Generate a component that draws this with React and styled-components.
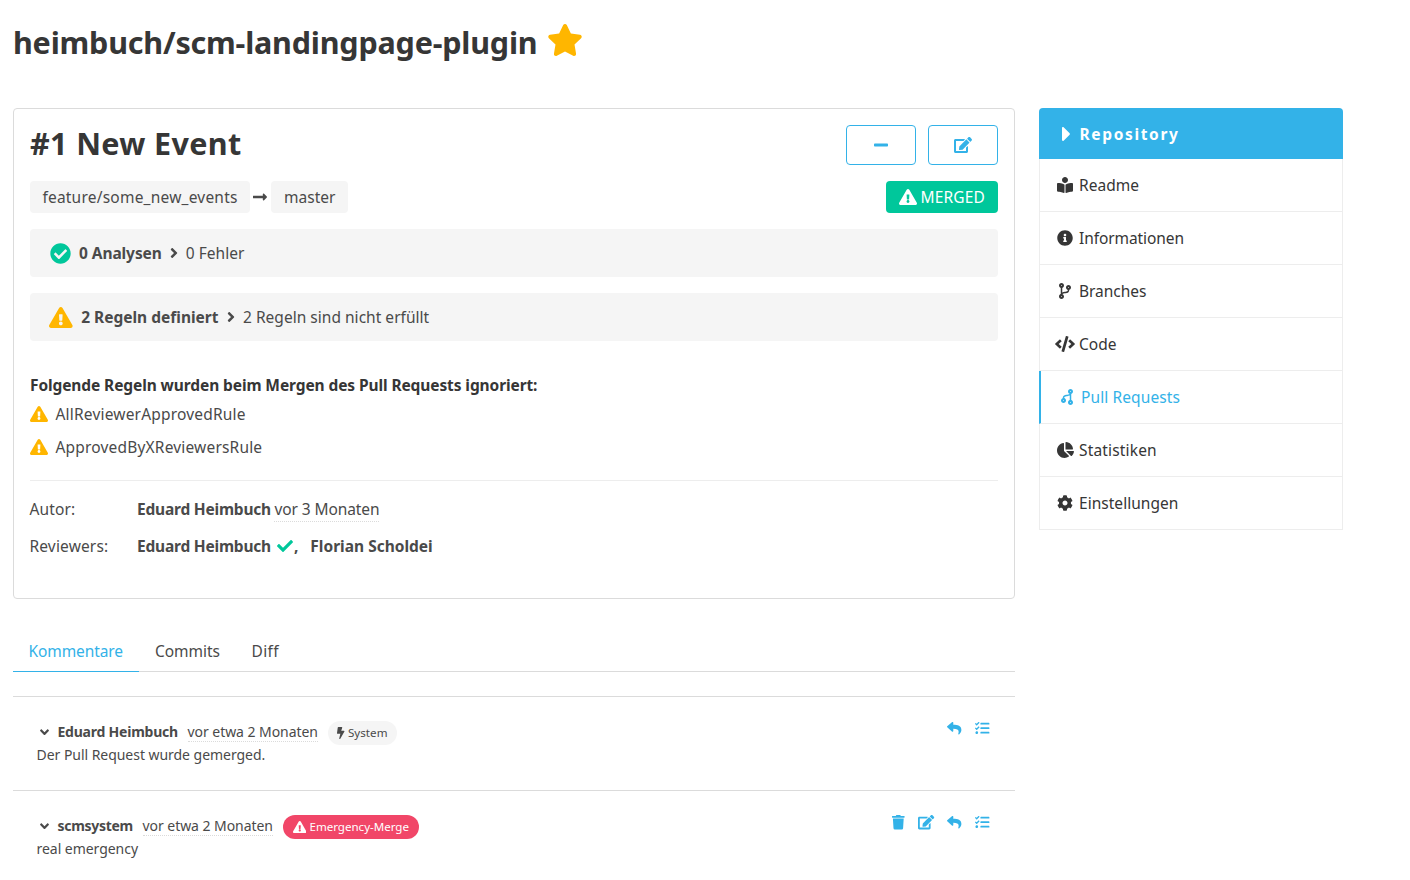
import React from "react";
import styled, { createGlobalStyle } from "styled-components";
import {
  FaStar, FaMinus, FaEdit, FaExclamationTriangle, FaLongArrowAltRight, FaCheckCircle,
  FaAngleRight, FaAngleDown, FaCheck, FaBolt, FaReply, FaTasks, FaTrash, FaCaretRight,
  FaBookReader, FaInfoCircle, FaCodeBranch, FaCode, FaChartPie, FaCog,
} from "react-icons/fa";

const c = {
  text: "#4a4a4a", dark: "#363636", blue: "#33b2e8", green: "#00c79b",
  yellow: "#ffb600", red: "#f14668", line: "#dbdbdb", soft: "#ededed", light: "#f5f5f5",
};

const GlobalStyle = createGlobalStyle`
  *, *::before, *::after { box-sizing: border-box; }
  body {
    margin: 0;
    background: #fff;
    color: ${c.text};
    font: 400 15.5px/24px "Noto Sans", "Open Sans", sans-serif;
    overflow: hidden;
  }
  h1, h2, p { margin: 0; padding: 0; }
`;

const Text = styled.span`
  font-weight: ${(p) => (p.$bold ? 700 : "inherit")};
  letter-spacing: ${(p) => p.$ls || 0}px;
  margin-left: ${(p) => p.$ml || 0}px;
  white-space: pre;
`;

/* $ratio is the glyph's width relative to its height */
const Icon = styled.span`
  display: inline-flex;
  flex: none;
  align-items: center;
  justify-content: center;
  width: ${(p) => (p.$width ? `${p.$width}px` : "auto")};
  margin-left: ${(p) => p.$ml || 0}px;
  font-size: ${(p) => p.$size || 16}px;
  color: ${(p) => p.$color || "inherit"};
  svg {
    flex: none;
    width: ${(p) => p.$ratio || 1}em;
    height: 1em;
    transform: ${(p) => (p.$flip ? "rotate(180deg)" : "none")};
  }
`;

const Page = styled.div`
  height: 880px;
  padding: 0 13px;
  overflow: hidden;
`;

const Header = styled.header`
  display: flex;
  align-items: flex-start;
  height: 108px;
  padding-top: 22px;
`;

const StarSlot = styled.span`
  display: flex;
  margin: 2px 0 0 10px;
`;

const RepoTitle = styled.h1`
  font-size: 30.5px;
  line-height: 40px;
  font-weight: 700;
  color: ${c.dark};
`;

const Columns = styled.div`
  display: flex;
  align-items: flex-start;
  gap: 24px;
`;

const Main = styled.main`
  width: 1002px;
`;

const Card = styled.section`
  height: 491px;
  padding: 16px;
  border: 1px solid ${c.line};
  border-radius: 4px;
`;

const CardTop = styled.div`
  display: flex;
  align-items: center;
  gap: 12px;
  height: 40px;
  margin-bottom: 16px;
`;

const PullTitle = styled.h2`
  flex: 1;
  padding-bottom: 4px;
  font-size: 30.5px;
  line-height: 36px;
  font-weight: 700;
  color: ${c.dark};
`;

const OutlineButton = styled.button`
  display: flex;
  align-items: center;
  justify-content: center;
  width: 70px;
  height: 40px;
  padding: 0 1px 0 0;
  border: 1px solid ${c.blue};
  border-radius: 4px;
  background: #fff;
  color: ${c.blue};
`;

const BranchRow = styled.div`
  display: flex;
  align-items: center;
  height: 32px;
  margin-bottom: 16px;
`;

const Tag = styled.span`
  display: flex;
  align-items: center;
  justify-content: center;
  width: ${(p) => p.$width}px;
  height: 32px;
  border-radius: 4px;
  background: ${(p) => (p.$merged ? c.green : c.light)};
  color: ${(p) => (p.$merged ? "#fff" : c.text)};
  margin-left: ${(p) => (p.$merged ? "auto" : 0)};
`;

const Arrow = styled.span`
  display: flex;
  justify-content: center;
  width: 21px;
  padding-right: 1px;
`;

const StatusBar = styled.div`
  display: flex;
  align-items: center;
  height: 48px;
  margin-bottom: 16px;
  padding-left: 19px;
  border-radius: 4px;
  background: ${c.light};
`;

const RulesTitle = styled.p`
  margin-top: 32px;
  height: 24px;
  color: ${c.dark};
`;

const RuleRow = styled.div`
  display: flex;
  align-items: center;
  height: 33px;
`;

const Divider = styled.div`
  height: 1px;
  margin: 17px 0 9px;
  background: ${c.soft};
`;

const MetaRow = styled.div`
  display: flex;
  align-items: center;
  height: 37px;
`;

const MetaLabel = styled.span`
  width: 107.5px;
  margin-left: -0.5px;
`;

const DateText = styled.span`
  display: block;
  height: ${(p) => (p.$small ? 20 : 26)}px;
  margin-left: ${(p) => (p.$small ? 9.5 : 3.5)}px;
  padding-top: ${(p) => (p.$small ? 0 : 1)}px;
  line-height: ${(p) => (p.$small ? 20 : 24)}px;
  border-bottom: 1px dotted ${c.line};
`;

const Tabs = styled.nav`
  display: flex;
  height: 41px;
  margin-top: 32px;
  border-bottom: 1px solid ${c.line};
`;

const Tab = styled.a`
  height: 41px;
  width: ${(p) => p.$width}px;
  padding: 8px 0 0 16px;
  color: ${(p) => (p.$active ? c.blue : c.text)};
  border-bottom: 1px solid ${(p) => (p.$active ? c.blue : "transparent")};
`;

const Comments = styled.div`
  margin-top: 24px;
`;

const Comment = styled.article`
  display: flex;
  justify-content: space-between;
  height: 94px;
  padding: 23px 18.5px 0 23.5px;
  border-top: 1px solid ${c.line};
  font-size: 14px;
  line-height: 22px;
`;

const CommentHead = styled.div`
  display: flex;
  align-items: flex-start;
  height: 24px;
`;

const CommentMeta = styled.div`
  display: flex;
  align-items: center;
  height: 22px;
  margin-top: 1px;
`;

const Pill = styled.span`
  display: flex;
  align-items: center;
  justify-content: center;
  width: ${(p) => p.$width}px;
  height: 24px;
  margin: 1px 0 0 10px;
  border-radius: 12px;
  background: ${(p) => (p.$danger ? c.red : c.light)};
  color: ${(p) => (p.$danger ? "#fff" : c.text)};
  font-size: 11.6px;
  line-height: 22px;
`;

const Actions = styled.div`
  display: flex;
  height: 17px;
  color: ${c.blue};
`;

const Aside = styled.aside`
  width: 304px;
`;

const MenuHeader = styled.p`
  display: flex;
  align-items: center;
  height: 51px;
  padding-left: 17.5px;
  border-radius: 4px 4px 0 0;
  background: ${c.blue};
  color: #fff;
`;

const MenuItem = styled.a`
  display: flex;
  align-items: center;
  height: 53px;
  padding-left: 15px;
  border: 1px solid ${c.soft};
  border-top: 0;
  color: ${(p) => (p.$active ? c.blue : c.dark)};
  ${(p) => p.$active && `border-left: 2px solid ${c.blue}; padding-left: 16px;`}
`;

const menu = [
  { icon: FaBookReader, label: "Readme", ls: 0.02 },
  { icon: FaInfoCircle, label: "Informationen", ls: -0.08 },
  { icon: FaCodeBranch, label: "Branches", ls: -0.04, ratio: 0.75 },
  { icon: FaCode, label: "Code", ls: 0.05, ratio: 1.25 },
  { icon: FaCodeBranch, label: "Pull Requests", ls: 0.1, ratio: 0.75, active: true, flip: true },
  { icon: FaChartPie, label: "Statistiken", ls: 0.16, ratio: 1.0625 },
  { icon: FaCog, label: "Einstellungen", ls: 0.03 },
];

const rules = [
  { label: "AllReviewerApprovedRule", ls: 0.19 },
  { label: "ApprovedByXReviewersRule", ls: 0.18 },
];

const actionIcons = {
  trash: { icon: FaTrash, ratio: 0.875 },
  edit: { icon: FaEdit, ratio: 1.125 },
  reply: { icon: FaReply, ratio: 1 },
  tasks: { icon: FaTasks, ratio: 1 },
};

const comments = [
  {
    author: "Eduard Heimbuch", authorLs: -0.222, body: "Der Pull Request wurde gemerged.",
    pill: { label: "System", width: 69, icon: FaBolt, ratio: 0.625, ls: 0.05 },
    actions: ["reply", "tasks"],
  },
  {
    author: "scmsystem", authorLs: -0.283, body: "real emergency",
    pill: { label: "Emergency-Merge", width: 136, icon: FaExclamationTriangle, ratio: 1.125, ls: -0.03, danger: true },
    actions: ["trash", "edit", "reply", "tasks"],
  },
];

export default function App() {
  return (
    <>
      <GlobalStyle />
      <Page>
        <Header>
          <RepoTitle><Text $ls={-0.2}>heimbuch/scm-landingpage-plugin</Text></RepoTitle>
          <StarSlot><Icon $size={32} $ratio={1.125} $color={c.yellow}><FaStar /></Icon></StarSlot>
        </Header>
        <Columns>
          <Main>
            <Card>
              <CardTop>
                <PullTitle><Text $ls={0.35}>#1 New Event</Text></PullTitle>
                <OutlineButton><Icon $ratio={0.875}><FaMinus /></Icon></OutlineButton>
                <OutlineButton><Icon $ratio={1.125}><FaEdit /></Icon></OutlineButton>
              </CardTop>
              <BranchRow>
                <Tag $width={220}><Text $ls={0.22}>feature/some_new_events</Text></Tag>
                <Arrow><Icon $ratio={0.875}><FaLongArrowAltRight /></Icon></Arrow>
                <Tag $width={77}><Text $ml={0.5}>master</Text></Tag>
                <Tag $width={112} $merged>
                  <Icon $ratio={1.125}><FaExclamationTriangle /></Icon>
                  <Text $ml={3.5} $ls={0.14}>MERGED</Text>
                </Tag>
              </BranchRow>
              <StatusBar>
                <Icon $ml={0.5} $size={21} $color={c.green}><FaCheckCircle /></Icon>
                <Text $bold $ml={8.5} $ls={-0.08}>0 Analysen</Text>
                <Icon $ml={8} $ratio={0.5}><FaAngleRight /></Icon>
                <Text $ml={8} $ls={0.04}>0 Fehler</Text>
              </StatusBar>
              <StatusBar>
                <Icon $size={21} $ratio={1.125} $color={c.yellow}><FaExclamationTriangle /></Icon>
                <Text $bold $ml={8.5}>2 Regeln definiert</Text>
                <Icon $ml={8} $ratio={0.5}><FaAngleRight /></Icon>
                <Text $ml={8.5} $ls={0.02}>2 Regeln sind nicht erfüllt</Text>
              </StatusBar>
              <RulesTitle><Text $bold $ls={-0.1}>Folgende Regeln wurden beim Mergen des Pull Requests ignoriert:</Text></RulesTitle>
              {rules.map((rule) => (
                <RuleRow key={rule.label}>
                  <Icon $ml={-0.5} $ratio={1.125} $color={c.yellow}><FaExclamationTriangle /></Icon>
                  <Text $ml={8} $ls={rule.ls}>{rule.label}</Text>
                </RuleRow>
              ))}
              <Divider />
              <MetaRow>
                <MetaLabel><Text $ls={0.14}>Autor:</Text></MetaLabel>
                <Text $bold $ls={-0.21}>Eduard Heimbuch</Text>
                <DateText><Text $ls={-0.09}>vor 3 Monaten</Text></DateText>
              </MetaRow>
              <MetaRow>
                <MetaLabel><Text $ls={0.15}>Reviewers:</Text></MetaLabel>
                <Text $bold $ls={-0.21}>Eduard Heimbuch</Text>
                <Icon $ml={6} $color={c.green}><FaCheck /></Icon>
                <Text $bold $ml={1}>,</Text>
                <Text $bold $ml={12}>Florian Scholdei</Text>
              </MetaRow>
            </Card>
            <Tabs>
              <Tab $active $width={126}><Text $ls={-0.1} $ml={-0.5}>Kommentare</Text></Tab>
              <Tab $width={96.5}><Text $ls={-0.05}>Commits</Text></Tab>
              <Tab $width={60}><Text $ls={0.4}>Diff</Text></Tab>
            </Tabs>
            <Comments>
              {comments.map(({ author, authorLs, body, pill, actions }) => (
                <Comment key={author}>
                  <div>
                    <CommentHead>
                      <CommentMeta>
                        <Icon $ml={0.5} $width={15} $size={14.4} $ratio={0.625}><FaAngleDown /></Icon>
                        <Text $bold $ml={5.5} $ls={authorLs}>{author}</Text>
                        <DateText $small><Text $ls={-0.05}>vor etwa 2 Monaten</Text></DateText>
                      </CommentMeta>
                      <Pill $width={pill.width} $danger={pill.danger}>
                        <Icon $size={12} $ratio={pill.ratio}><pill.icon /></Icon>
                        <Text $ml={3} $ls={pill.ls}>{pill.label}</Text>
                      </Pill>
                    </CommentHead>
                    <p><Text $ls={-0.04}>{body}</Text></p>
                  </div>
                  <Actions>
                    {actions.map((name) => {
                      const { icon: Glyph, ratio } = actionIcons[name];
                      return <Icon key={name} $width={28} $size={14.4} $ratio={ratio}><Glyph /></Icon>;
                    })}
                  </Actions>
                </Comment>
              ))}
            </Comments>
          </Main>
          <Aside>
            <MenuHeader>
              <Icon $width={20} $size={24} $ratio={0.375}><FaCaretRight /></Icon>
              <Text $bold $ml={3} $ls={1.65}>Repository</Text>
            </MenuHeader>
            {menu.map(({ icon: Glyph, label, ls, ratio, active, flip }) => (
              <MenuItem key={label} $active={active}>
                <Icon $width={20} $flip={flip} $ratio={ratio}><Glyph /></Icon>
                <Text $ml={4} $ls={ls}>{label}</Text>
              </MenuItem>
            ))}
          </Aside>
        </Columns>
      </Page>
    </>
  );
}
